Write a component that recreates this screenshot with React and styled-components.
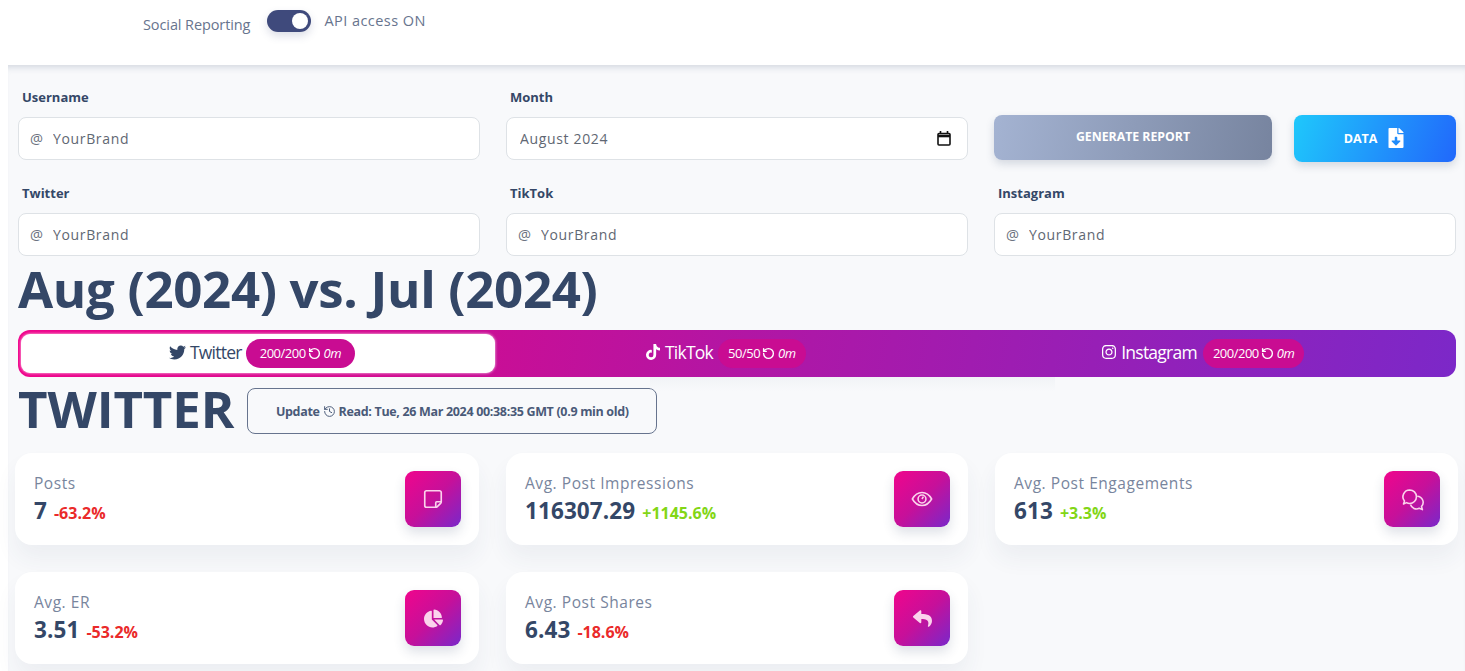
import React from "react";
import styled, { createGlobalStyle } from "styled-components";
import { FaTwitter, FaInstagram, FaReply, FaChartPie, FaFileDownload } from "react-icons/fa";
import { FaTiktok } from "react-icons/fa6";
import { RotateCcw, History, StickyNote } from "lucide-react";

const Global = createGlobalStyle`
  html, body { margin: 0; padding: 0; background: #fff; height: 671px; overflow: hidden; }
  body { padding-left: 8px; font-family: "Open Sans", "Liberation Sans", sans-serif; color: #344767; }
  * { box-sizing: border-box; }
`;

const TopBar = styled.header`
  height: 65px;
  display: flex;
  align-items: flex-start;
  padding: 9px 0 0 135px;
  font-size: 14.5px;
  color: #67748e;
`;
const SwitchLabel = styled.span`
  margin-top: ${(p) => p.$top}px;
  letter-spacing: ${(p) => p.$track}px;
`;
const Toggle = styled.span`
  width: 44px;
  height: 22px;
  margin: 1px 13px 0 17px;
  padding: 3px;
  border-radius: 11px;
  background: #3f4a7c;
  display: flex;
  justify-content: flex-end;
  box-shadow: 0 4px 8px rgba(60, 70, 120, 0.18);
`;
const Knob = styled.span`
  width: 16px;
  height: 16px;
  border-radius: 50%;
  background: #fff;
`;

const Main = styled.main`
  height: 606px;
  background: #f8f9fb;
  padding: 20px 9px 0 10px;
  box-shadow: inset 0 7px 7px -5px rgba(52, 71, 103, 0.2);
`;
const FormGrid = styled.div`
  display: grid;
  grid-template-columns: repeat(3, 1fr);
  column-gap: 26px;
  row-gap: 19px;
`;
const Field = styled.label`
  display: flex;
  flex-direction: column;
`;
const FieldLabel = styled.span`
  height: 24px;
  padding: 3px 0 0 4px;
  margin-bottom: 8px;
  font-size: 13px;
  line-height: 18px;
  font-weight: 700;
  color: #344767;
`;
const InputShell = styled.span`
  height: 43px;
  display: flex;
  align-items: center;
  padding: 0 16px 0 11px;
  background: #fff;
  border: 1px solid #dee2e6;
  border-radius: 8px;
  font-size: 14px;
  color: #6b7280;
`;
const At = styled.span`
  width: 23px;
  font-size: 14.5px;
`;
const TextInput = styled.input`
  flex: 1;
  min-width: 0;
  border: 0;
  outline: 0;
  padding: 0 0 0 ${(p) => p.$indent || 0}px;
  background: transparent;
  font: inherit;
  letter-spacing: 0.65px;
  color: #5f6773;
`;
const ActionRow = styled.div`
  display: grid;
  grid-template-columns: 278px 162px;
  justify-content: space-between;
  align-items: start;
  padding-top: 30px;
`;
const ActionButton = styled.button`
  border: 0;
  border-radius: 8px;
  color: #fff;
  font: 700 ${(p) => p.$size}px "Open Sans", sans-serif;
  display: flex;
  align-items: center;
  justify-content: center;
  gap: 9px;
  height: ${(p) => p.$h}px;
  padding-bottom: ${(p) => p.$pb}px;
  background: ${(p) => p.$bg};
  box-shadow: 0 4px 8px rgba(52, 71, 103, 0.18);
`;
const Heading = styled.h1`
  margin: 0;
  height: 74px;
  padding-top: 1px;
  font-size: 51px;
  line-height: 62px;
  font-weight: 700;
  letter-spacing: -0.33px;
  color: #344767;
`;
const TabBar = styled.nav`
  height: 47px;
  border-radius: 12px;
  padding: 4px 0 4px 3px;
  display: grid;
  grid-template-columns: 474px 1fr 1fr;
  background: linear-gradient(100deg, #f0058c 0%, #cf0c92 28%, #ac18a8 55%, #7c28c8 100%);
`;
const Tab = styled.div`
  display: flex;
  align-items: center;
  justify-content: center;
  gap: 4px;
  padding: 0 ${(p) => p.$pr || 0}px 3px ${(p) => p.$pl || 0}px;
  font-size: 17.5px;
  letter-spacing: -0.75px;
  border-radius: 9px;
  color: ${(p) => (p.$active ? "#344767" : "#fff")};
  background: ${(p) => (p.$active ? "#fff" : "transparent")};
  box-shadow: ${(p) => (p.$active ? "0 0 3px rgba(255,255,255,.9)" : "none")};
`;
const Quota = styled.span`
  height: 29px;
  margin: 2px 0 0 ${(p) => p.$gap || 0}px;
  padding: 0 ${(p) => p.$pad}px;
  display: inline-flex;
  align-items: center;
  gap: 2px;
  border-radius: 15px;
  background: #c90c92;
  color: #fff;
  font-size: 13px;
  letter-spacing: -0.5px;
`;
const Minutes = styled.em`
  margin-left: 1px;
`;
const SectionRow = styled.div`
  height: 76px;
  display: flex;
  align-items: flex-start;
  gap: 13px;
  position: relative;
`;
const SectionTitle = styled.h2`
  margin: 0;
  font-size: 51px;
  line-height: 62px;
  font-weight: 700;
  letter-spacing: -0.1px;
  color: #344767;
`;
const UpdateButton = styled.button`
  margin-top: 11px;
  width: 410px;
  height: 46px;
  background: transparent;
  border: 1.5px solid #67748e;
  border-radius: 8px;
  display: flex;
  align-items: center;
  justify-content: center;
  gap: 3px;
  font: 700 12.5px "Open Sans", sans-serif;
  letter-spacing: -0.33px;
  color: #4a5a78;
`;
const TabShadow = styled.div`
  position: absolute;
  left: 632px;
  top: 0;
  width: 405px;
  height: 14px;
  background: linear-gradient(180deg, #f1f3f6, rgba(241, 243, 246, 0));
`;
const Cards = styled.section`
  margin: 0 -2px 0 -3px;
  display: grid;
  grid-template-columns: 464px 462px 463px;
  column-gap: 27px;
  row-gap: 27px;
`;
const Card = styled.article`
  height: 92px;
  padding: 18px 18px 0 19px;
  display: flex;
  justify-content: space-between;
  align-items: flex-start;
  background: #fff;
  border-radius: 17px;
  box-shadow: 0 14px 22px rgba(52, 71, 103, 0.06);
`;
const CardText = styled.div`
  display: flex;
  flex-direction: column;
`;
const CardLabel = styled.span`
  font-size: 15.5px;
  line-height: 24px;
  letter-spacing: 0.55px;
  color: #78859d;
`;
const CardValue = styled.div`
  display: flex;
  align-items: baseline;
  gap: 7px;
  margin-top: 0;
  font-size: 22.5px;
  line-height: 32px;
  font-weight: 700;
  letter-spacing: 0.1px;
  color: #344767;
`;
const Delta = styled.span`
  font-size: 16px;
  font-weight: 700;
  letter-spacing: 0;
  color: ${(p) => (p.$up ? "#82d616" : "#ea2a2a")};
`;
const IconTile = styled.div`
  width: 56px;
  height: 56px;
  border-radius: 9px;
  display: flex;
  align-items: center;
  justify-content: center;
  color: #fbd3ec;
  background: linear-gradient(135deg, #f0058c 0%, #c6109a 50%, #7928ca 100%);
  box-shadow: 0 6px 12px rgba(52, 71, 103, 0.16);
`;
const NoteIcon = styled(StickyNote)`
  transform: rotate(90deg);
`;

const CalendarIcon = () => (
  <svg width="14" height="15" viewBox="0 0 14 15" fill="none" stroke="#111" strokeWidth="1.6">
    <rect x="1" y="2.500" width="12" height="11.500" rx="1" />
    <path d="M1 5h12" strokeWidth="2.600" />
    <path d="M3.500 0v2M10.500 0v2" />
  </svg>
);
const EyeIcon = () => (
  <svg width="22" height="22" viewBox="0 0 24 24" fill="none" stroke="currentColor" strokeWidth="1.7">
    <path d="M1.5 12C4 7.5 7.6 5 12 5s8 2.500 10.500 7c-2.500 4.500-6.100 7-10.500 7S4 16.500 1.500 12z" />
    <circle cx="12" cy="12" r="4.300" />
    <path d="M12 12l1.500-2.500" />
  </svg>
);
const ChatsIcon = () => (
  <svg width="27" height="27" viewBox="0 0 24 24" fill="none" stroke="currentColor" strokeWidth="1.400" strokeLinejoin="round">
    <path d="M9.500 3.500a6 6 0 0 1 0 12c-1 0-2-.2-2.800-.7L4 16l.9-2.700A6 6 0 0 1 9.500 3.500z" />
    <path d="M16.200 9.100a5.500 5.500 0 0 1 3.800 9.200l.8 2.700-2.800-1.200a5.500 5.500 0 0 1-7.800-3.300" />
  </svg>
);

const handles = ["Twitter", "TikTok", "Instagram"];
const metrics = [
  { label: "Posts", value: "7", delta: "-63.2%", icon: <NoteIcon size={22} strokeWidth={1.8} /> },
  { label: "Avg. Post Impressions", value: "116307.29", delta: "+1145.6%", up: true, icon: <EyeIcon /> },
  { label: "Avg. Post Engagements", value: "613", delta: "+3.3%", up: true, icon: <ChatsIcon /> },
  { label: "Avg. ER", value: "3.51", delta: "-53.2%", icon: <FaChartPie size={19} /> },
  { label: "Avg. Post Shares", value: "6.43", delta: "-18.6%", icon: <FaReply size={19} /> },
];

const HandleField = ({ label }) => (
  <Field>
    <FieldLabel>{label}</FieldLabel>
    <InputShell>
      <At>@</At>
      <TextInput readOnly value="YourBrand" />
    </InputShell>
  </Field>
);

const QuotaPill = ({ text, gap, pad }) => (
  <Quota $gap={gap} $pad={pad}>
    {text}
    <RotateCcw size={13} strokeWidth={2.6} />
    <Minutes>0m</Minutes>
  </Quota>
);

export default function App() {
  return (
    <>
      <Global />
      <TopBar>
        <SwitchLabel $top={6} $track={-0.1}>Social Reporting</SwitchLabel>
        <Toggle><Knob /></Toggle>
        <SwitchLabel $top={2} $track={0.45}>API access ON</SwitchLabel>
      </TopBar>
      <Main>
        <FormGrid>
          <HandleField label="Username" />
          <Field>
            <FieldLabel>Month</FieldLabel>
            <InputShell>
              <TextInput readOnly $indent={2} value="August 2024" />
              <CalendarIcon />
            </InputShell>
          </Field>
          <ActionRow>
            <ActionButton $size={12.3} $h={45} $pb={3} $bg="linear-gradient(100deg, #a4b3d2, #77849f)">GENERATE REPORT</ActionButton>
            <ActionButton $size={12.5} $h={47} $pb={2} $bg="linear-gradient(110deg, #1fc8fb, #2168fb)">
              DATA <FaFileDownload size={20} />
            </ActionButton>
          </ActionRow>
          {handles.map((l) => <HandleField key={l} label={l} />)}
        </FormGrid>
        <Heading>Aug (2024) vs. Jul (2024)</Heading>
        <TabBar>
          <Tab $active $pl={8}><FaTwitter size={17} /> Twitter <QuotaPill text="200/200" pad={14} /></Tab>
          <Tab $pr={20}><FaTiktok size={16} /> TikTok <QuotaPill text="50/50" gap={1} pad={10} /></Tab>
          <Tab $pr={26}><FaInstagram size={16} /> Instagram <QuotaPill text="200/200" gap={2} pad={10} /></Tab>
        </TabBar>
        <SectionRow>
          <TabShadow />
          <SectionTitle>TWITTER</SectionTitle>
          <UpdateButton>Update <History size={13} strokeWidth={1.8} /> Read: Tue, 26 Mar 2024 00:38:35 GMT (0.9 min old)</UpdateButton>
        </SectionRow>
        <Cards>
          {metrics.map((m) => (
            <Card key={m.label}>
              <CardText>
                <CardLabel>{m.label}</CardLabel>
                <CardValue>{m.value} <Delta $up={m.up}>{m.delta}</Delta></CardValue>
              </CardText>
              <IconTile>{m.icon}</IconTile>
            </Card>
          ))}
        </Cards>
      </Main>
    </>
  );
}
